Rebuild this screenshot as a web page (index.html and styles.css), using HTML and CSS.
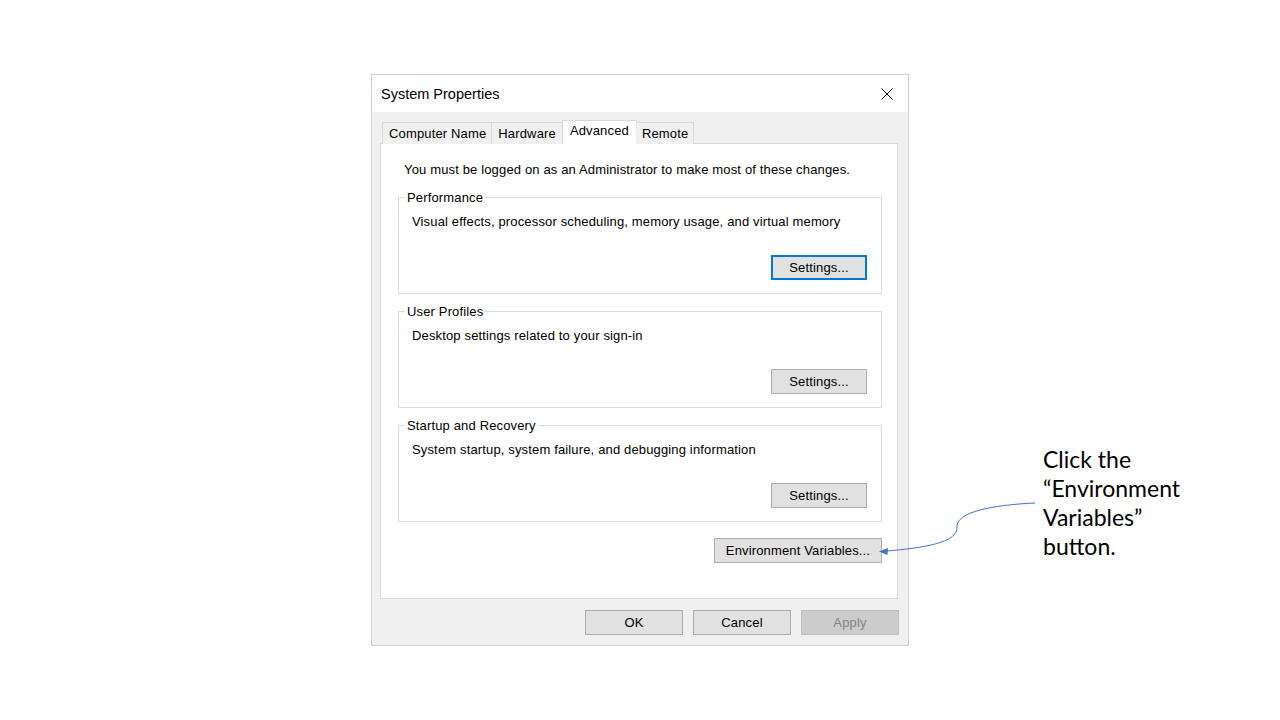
FILE: index.html
```html
<!DOCTYPE html>
<html lang="en">
<head>
<meta charset="utf-8">
<title>System Properties</title>
<link rel="stylesheet" href="styles.css">
</head>
<body>
<div class="stage">
  <div class="dialog">
    <div class="titlebar">
      <span class="title">System Properties</span>
      <svg class="close" width="12" height="12" viewBox="0 0 12 12"><path d="M0.5 0.5L11.5 11.5M11.5 0.5L0.5 11.5" stroke="#000" stroke-width="1" fill="none"/></svg>
    </div>
    <div class="body">
      <div class="tabs">
        <div class="tab">Computer Name</div>
        <div class="tab">Hardware</div>
        <div class="tab active">Advanced</div>
        <div class="tab">Remote</div>
      </div>
      <div class="panel">
        <p class="note">You must be logged on as an Administrator to make most of these changes.</p>
        <fieldset class="group">
          <legend>Performance</legend>
          <p class="desc">Visual effects, processor scheduling, memory usage, and virtual memory</p>
          <button class="btn focus">Settings...</button>
        </fieldset>
        <fieldset class="group">
          <legend>User Profiles</legend>
          <p class="desc">Desktop settings related to your sign-in</p>
          <button class="btn">Settings...</button>
        </fieldset>
        <fieldset class="group">
          <legend>Startup and Recovery</legend>
          <p class="desc">System startup, system failure, and debugging information</p>
          <button class="btn">Settings...</button>
        </fieldset>
        <div class="env-row">
          <button class="btn env">Environment Variables...</button>
        </div>
      </div>
      <div class="actions">
        <button class="btn action">OK</button>
        <button class="btn action">Cancel</button>
        <button class="btn action disabled">Apply</button>
      </div>
    </div>
  </div>
</div>
<div class="callout">Click the<br>“Environment<br>Variables”<br>button.</div>
<svg class="arrow" width="1280" height="720" viewBox="0 0 1280 720">
  <path d="M1035 503 C 992 505 956 512 957 527 C 958 543 922 548 887 551" stroke="#4472c4" stroke-width="1" fill="none"/>
  <path d="M879 551.5 L888 548 L887.5 555 Z" fill="#4472c4"/>
</svg>
</body>
</html>
```
FILE: styles.css
```css
* { box-sizing: border-box; }
html, body { margin: 0; padding: 0; }
body {
  width: 1280px;
  height: 720px;
  background: #ffffff;
  position: relative;
  overflow: hidden;
  font-family: "Liberation Sans", Arial, sans-serif;
  font-size: 13px;
  letter-spacing: 0.15px;
  color: #000;
}
.stage {
  padding: 74px 0 0 371px;
}
.dialog {
  width: 538px;
  height: 572px;
  border: 1px solid #cfcfcf;
  background: #f0f0f0;
  display: flex;
  flex-direction: column;
}
.titlebar {
  height: 37px;
  background: #ffffff;
  display: flex;
  align-items: center;
  justify-content: space-between;
  padding: 0 15px 0 9px;
}
.title {
  font-size: 14.5px;
  letter-spacing: 0;
  color: #000;
}
.close { display: block; }
.body {
  padding: 8px 10px 0 8px;
  display: flex;
  flex-direction: column;
}
.tabs {
  display: flex;
  align-items: flex-end;
  padding-left: 2px;
  height: 24px;
  position: relative;
  z-index: 1;
}
.tab {
  height: 22px;
  padding: 0 5px 0 6px;
  border: 1px solid #d9d9d9;
  border-bottom: none;
  border-right: none;
  background: #f0f0f0;
  line-height: 21px;
  white-space: nowrap;
}
.tab:nth-child(2) { padding-right: 6px; }
.tab:nth-child(4) { border-right: 1px solid #d9d9d9; }
.tab.active {
  height: 24px;
  padding: 0 7px;
  background: #ffffff;
  border-right: 1px solid #d9d9d9;
  line-height: 20px;
  margin-right: -1px;
}
.tab.active + .tab { border-left: none; }
.panel {
  height: 456px;
  margin-top: -1px;
  background: #ffffff;
  border: 1px solid #d9d9d9;
  padding: 18px 15px 0 17px;
}
.note {
  margin: 0 0 0 6px;
  line-height: 15px;
}
.group {
  margin: 12px 0 0;
  border: 1px solid #dcdcdc;
  padding: 3px 14px 13px 13px;
  height: 105px;
  display: flex;
  flex-direction: column;
  align-items: flex-end;
}
.group + .group { margin-top: 9px; }
.group legend {
  padding: 0 2px;
  margin-left: -7px;
  line-height: 17px;
}
.desc {
  margin: 5px 0 0;
  align-self: flex-start;
  line-height: 16px;
}
.btn {
  font-family: "Liberation Sans", Arial, sans-serif;
  font-size: 13px;
  letter-spacing: 0.15px;
  color: #000;
  background: #e1e1e1;
  border: 1px solid #adadad;
  padding: 0;
  margin: 0;
  height: 25px;
}
.group .btn {
  width: 96px;
  height: 25px;
  margin-top: auto;
}
.btn.focus {
  border: 2px solid #0078d7;
}
.env-row {
  display: flex;
  justify-content: flex-end;
  margin-top: 16px;
}
.btn.env {
  width: 168px;
}
.actions {
  display: flex;
  justify-content: flex-end;
  gap: 10px;
  margin-top: 11px;
  margin-right: -1px;
}
.btn.action {
  width: 98px;
  height: 25px;
}
.btn.disabled {
  background: #cccccc;
  border-color: #bfbfbf;
  color: #838383;
}
.callout {
  position: absolute;
  left: 1043px;
  top: 445px;
  font-family: Lato, "Open Sans", sans-serif;
  font-size: 23px;
  letter-spacing: 0;
  line-height: 29px;
  color: #000;
}
.arrow {
  position: absolute;
  left: 0;
  top: 0;
  pointer-events: none;
}
```
